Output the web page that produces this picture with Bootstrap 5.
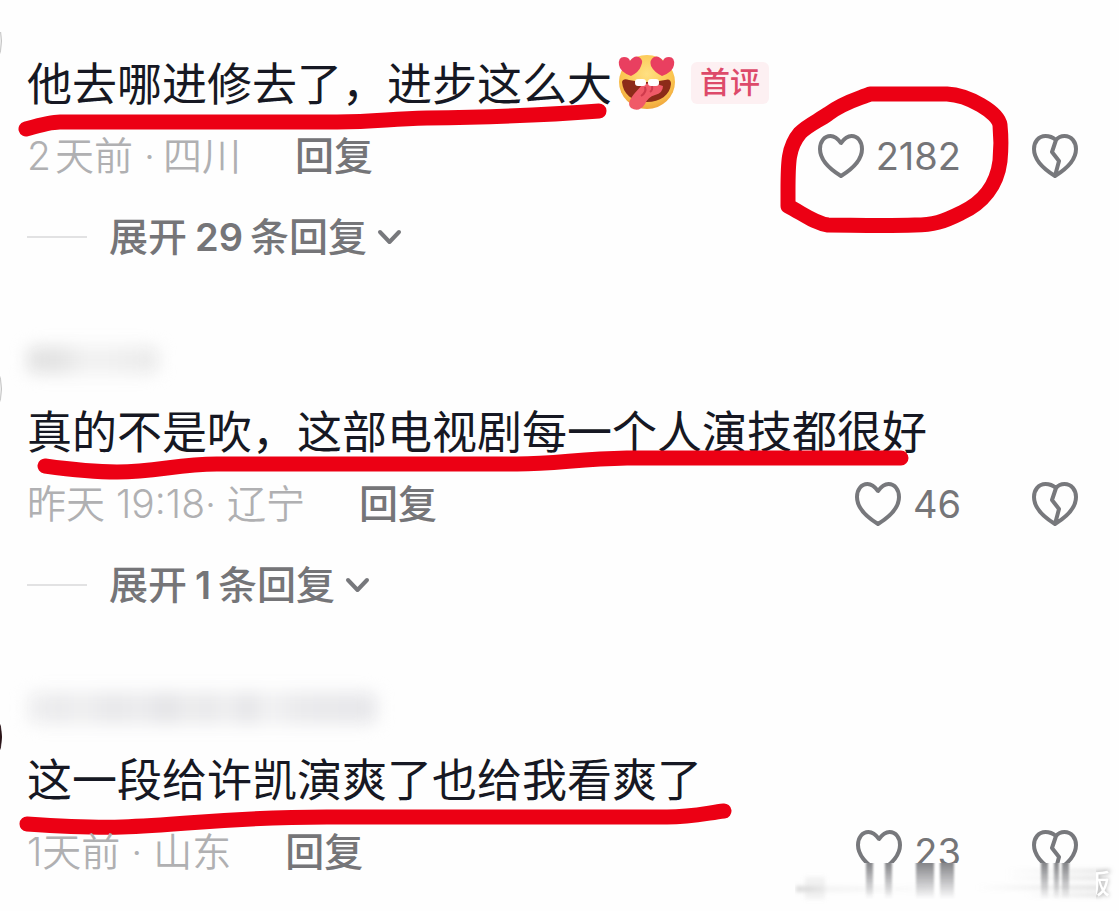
<!DOCTYPE html>
<html lang="zh-CN">
<head>
<meta charset="utf-8">
<meta name="viewport" content="width=device-width, initial-scale=1">
<title>评论</title>
<link href="https://cdn.jsdelivr.net/npm/bootstrap@5.3.0/dist/css/bootstrap.min.css" rel="stylesheet">
<style>
body{background:#fefefe;color:#161823;font-family:Inter,"Noto Sans CJK SC",sans-serif;overflow-x:hidden}
main{padding:47px 41px 22px 27px}
.comment{margin-bottom:44px}
.avatar-edge{left:-127px;top:13px;width:102px;height:102px;border:1px solid #c4c4c4;background:#eee}
.avatar-edge.dark{background:#2a1418;border-color:#2a1418}
.first .avatar-edge{top:-57px;clip-path:inset(42px 0 0 0)}
.user{height:70px}
.veil{filter:blur(8px);height:28px;border-radius:8px}
.veil-short{width:132px;background:linear-gradient(90deg,#e2e2e2,#e4e4e4 25%,#f2f2f2 45%,#f1f1f1 60%,#eaeaea)}
.veil-long{width:350px;height:32px;background:linear-gradient(90deg,#f0f0f1,#eaeaec 10%,#f0f0f1 15%,#e8e8ea 24%,#ececee 33%,#e3e3e6 40%,#ededee 46%,#e8e8ea 52%,#f0f0f1 57%,#e4e4e7 63%,#f2f2f3 69%,#eaeaec 78%,#e7e7ea)}
.words{height:72px;font-size:45px;line-height:76px;font-weight:400;white-space:nowrap}
.first-line{padding-top:4px}
.info{height:74px;font-size:39px;line-height:74px;font-weight:350;color:#b0b0b2;white-space:nowrap}
.info button,.more button{border:0;background:none;padding:0;color:#757578;line-height:inherit}
.answer{font-weight:500;margin-left:54px}
.like{gap:12px;margin-right:71px;font-size:38px;font-weight:400}
.more{height:88px;line-height:88px;font-size:39px;gap:22px}
.more button{font-weight:500}
.more .ico{margin-left:10px}
.count{font-size:38px;font-weight:600;margin:0 7px 0 8px}
.days{margin-right:4px}
.place{margin-left:8px}
.rule{width:60px;height:2px;background:#e2e2e3}
.first-tag{font-size:30px;line-height:30px;font-weight:500;color:#dd4a6a;background:#fdf0f2;border-radius:6px;padding:5px 9px 7px;margin-left:14px}
.face{margin-left:5px}
.pen{fill:none;stroke:#ec0014;stroke-width:15;stroke-linecap:round;stroke-linejoin:round;pointer-events:none;overflow:visible}
.pen-line{left:0;top:0}
.pen-ring{left:-38px;top:-18px}
.ico{fill:none;stroke:#77787c;stroke-width:4;stroke-linejoin:round;stroke-linecap:round;display:block}
.smear{right:-41px;top:48px;pointer-events:none}
.stamp{font-size:27px;font-weight:500;fill:#fff;filter:drop-shadow(0 0 2px #aaa)}
</style>
</head>
<body>
<svg width="0" height="0" class="position-absolute" aria-hidden="true">
<symbol id="heart" viewBox="0 0 46 44"><path d="M23 9C19 3.500 15.500 2 12.500 2C6 2 2 8 2 15C2 25 10 34 23 42C36 34 44 25 44 15C44 8 40 2 33.500 2C30.500 2 27 3.500 23 9Z"/></symbol>
<symbol id="broken" viewBox="0 0 46 44"><path d="M24 6C20.500 3 17 2 13.500 2C6.500 2 2 8 2 15C2 25 10 34 23 42C36 34 44 25 44 15C44 8 39.500 2 32.500 2C29 2 26 3.500 24 6L20 18L27 27L23 42"/></symbol>
</svg>
<main class="position-relative overflow-hidden">
<article class="comment first position-relative">
<div class="avatar-edge rounded-circle position-absolute"></div>
<div class="words d-flex align-items-center position-relative"><span class="first-line">他去哪进修去了，进步这么大</span>
<svg class="face" width="60" height="58" viewBox="0 0 60 58" role="img" aria-label="色">
<defs><radialGradient id="skin" cx=".5" cy=".35" r=".65"><stop offset="0" stop-color="#ffe082"/><stop offset=".7" stop-color="#fbc54f"/><stop offset="1" stop-color="#f0a63c"/></radialGradient></defs>
<ellipse cx="30" cy="28" rx="28" ry="27" fill="url(#skin)"/>
<path d="M5 28Q6 24 12 26Q30 30 48 26Q54 24 54 30C53 41 43 48 30 48C15 48 6 40 5 28Z" fill="#8c2b19"/>
<path d="M46 32Q34 27 25 31L17 40Q9 50 14 54Q22 59 28 50Q31 43 38 41Q46 39 46 32Z" fill="#f05a68"/>
<path d="M28 33Q30 38 24 42M35 32Q36 36 33 38" fill="none" stroke="#cf3a4c" stroke-width="2"/>
<rect x="18" y="25" width="11" height="7" rx="3" fill="#fff"/><rect x="31" y="25" width="11" height="7" rx="3" fill="#fff"/>
<path d="M14 22Q3 18 2 11Q1 3 7 3Q12 3 13 7Q17 1 22 3Q27 6 24 12Q22 18 14 22Z" fill="#e93f60"/>
<path d="M45 22Q56 18 57 11Q58 3 52 3Q47 3 46 7Q42 1 37 3Q32 6 34 12Q37 18 45 22Z" fill="#e93f60"/>
</svg>
<span class="first-tag">首评</span>
<svg class="pen pen-line position-absolute" width="600" height="100"><path d="M-1 82C13 78 23 75 33 75H310C350 75 360 72 400 71C480 70 520 68 572 64"/></svg>
</div>
<div class="info d-flex align-items-center"><span><span class="days">2</span>天前 ·<span class="place">四川</span></span><button class="answer" type="button">回复</button>
<button class="like d-flex align-items-center ms-auto position-relative" type="button"><svg class="ico" width="46" height="44"><use href="#heart"/></svg>2182
<svg class="pen pen-ring position-absolute" width="230" height="150"><path d="M8 90C8 62 8 46 20 32C28 24 38 20 48 13C64 1 78-2 90-7C115-7 145-7 167-7C188-6 218 11 220 24C221 34 221 50 220 60C217 84 203 102 181 112C163 121 153 124 135 124C102 125 70 124 48 124C34 122 22 112 8 105Z"/></svg></button>
<button type="button" aria-label="不喜欢"><svg class="ico" width="46" height="44"><use href="#broken"/></svg></button></div>
<div class="more d-flex align-items-center"><span class="rule"></span><button type="button" class="d-flex align-items-center">展开<span class="count">29</span>条回复<svg class="ico" width="25" height="16" viewBox="0 0 25 16"><path d="M3 3L12.500 13L22 3"/></svg></button></div>
</article>
<article class="comment position-relative">
<div class="avatar-edge rounded-circle position-absolute"></div>
<div class="user d-flex align-items-center"><span class="veil veil-short"></span></div>
<div class="words position-relative">真的不是吹，这部电视剧每一个人演技都很好
<svg class="pen pen-line position-absolute" width="900" height="100"><path d="M18 71C40 74 62 77 90 77C130 77 150 69 190 69H490C530 69 550 64 600 63H874"/></svg></div>
<div class="info d-flex align-items-center"><span>昨天 19:18· 辽宁</span><button class="answer" type="button">回复</button>
<button class="like d-flex align-items-center ms-auto" type="button"><svg class="ico" width="46" height="44"><use href="#heart"/></svg>46</button>
<button type="button" aria-label="不喜欢"><svg class="ico" width="46" height="44"><use href="#broken"/></svg></button></div>
<div class="more d-flex align-items-center"><span class="rule"></span><button type="button" class="d-flex align-items-center">展开<span class="count">1</span>条回复<svg class="ico" width="25" height="16" viewBox="0 0 25 16"><path d="M3 3L12.500 13L22 3"/></svg></button></div>
</article>
<article class="position-relative">
<div class="avatar-edge dark rounded-circle position-absolute"></div>
<div class="user d-flex align-items-center"><span class="veil veil-long"></span></div>
<div class="words position-relative">这一段给许凯演爽了也给我看爽了
<svg class="pen pen-line position-absolute" width="720" height="100"><path d="M0 81C30 83 60 85 95 84C160 82 200 74 300 74H640C665 74 680 70 697 68"/></svg></div>
<div class="info d-flex align-items-center position-relative"><span>1天前 · 山东</span><button class="answer" type="button">回复</button>
<button class="like d-flex align-items-center ms-auto" type="button"><svg class="ico" width="46" height="44"><use href="#heart"/></svg>23</button>
<button type="button" aria-label="不喜欢"><svg class="ico" width="46" height="44"><use href="#broken"/></svg></button>
<svg class="smear position-absolute" width="324" height="48" viewBox="0 0 324 48" aria-hidden="true">
<defs>
<linearGradient id="drip" x1="0" y1="0" x2="0" y2="1"><stop offset="0" stop-color="#77787c" stop-opacity=".9"/><stop offset=".5" stop-color="#77787c" stop-opacity=".45"/><stop offset="1" stop-color="#77787c" stop-opacity="0"/></linearGradient>
<linearGradient id="left" x1="0" x2="1"><stop offset="0" stop-color="#999" stop-opacity=".4"/><stop offset=".25" stop-color="#bbb" stop-opacity=".15"/><stop offset="1" stop-color="#ccc" stop-opacity=".05"/></linearGradient>
<linearGradient id="right" x1="0" x2="1"><stop offset="0" stop-color="#bbb" stop-opacity="0"/><stop offset="1" stop-color="#aaa" stop-opacity=".35"/></linearGradient>
<filter id="soft" x="-20%" y="-50%" width="140%" height="200%"><feGaussianBlur stdDeviation="2"/></filter>
<filter id="edge" x="-5%" y="0" width="110%" height="100%"><feGaussianBlur stdDeviation="1 0"/></filter>
<clipPath id="half"><rect x="301" y="0" width="23" height="48"/></clipPath>
</defs>
<rect x="50" width="274" height="48" fill="#fefefe"/>
<g filter="url(#soft)">
<rect x="1" y="23" width="130" height="6" fill="url(#left)"/>
<rect x="10" y="14" width="20" height="22" fill="#ccc" opacity=".25"/>
<rect x="210" y="6" width="106" height="4" fill="url(#right)"/>
<rect x="210" y="13" width="96" height="4" fill="url(#right)"/>
<rect x="180" y="22" width="126" height="5" fill="url(#right)"/>
<rect x="230" y="30" width="78" height="4" fill="url(#right)"/>
</g>
<g fill="url(#drip)" filter="url(#edge)"><rect x="71" width="7" height="36"/><rect x="90" width="7" height="36"/><rect x="121" width="18" height="36"/><rect x="145" width="14" height="36"/><rect x="246" width="7" height="36"/><rect x="259" width="5" height="36"/><rect x="267" width="7" height="36"/></g>
<g clip-path="url(#half)"><text class="stamp" x="288" y="31">版</text></g>
</svg></div>
</article>
</main>
</body>
</html>
